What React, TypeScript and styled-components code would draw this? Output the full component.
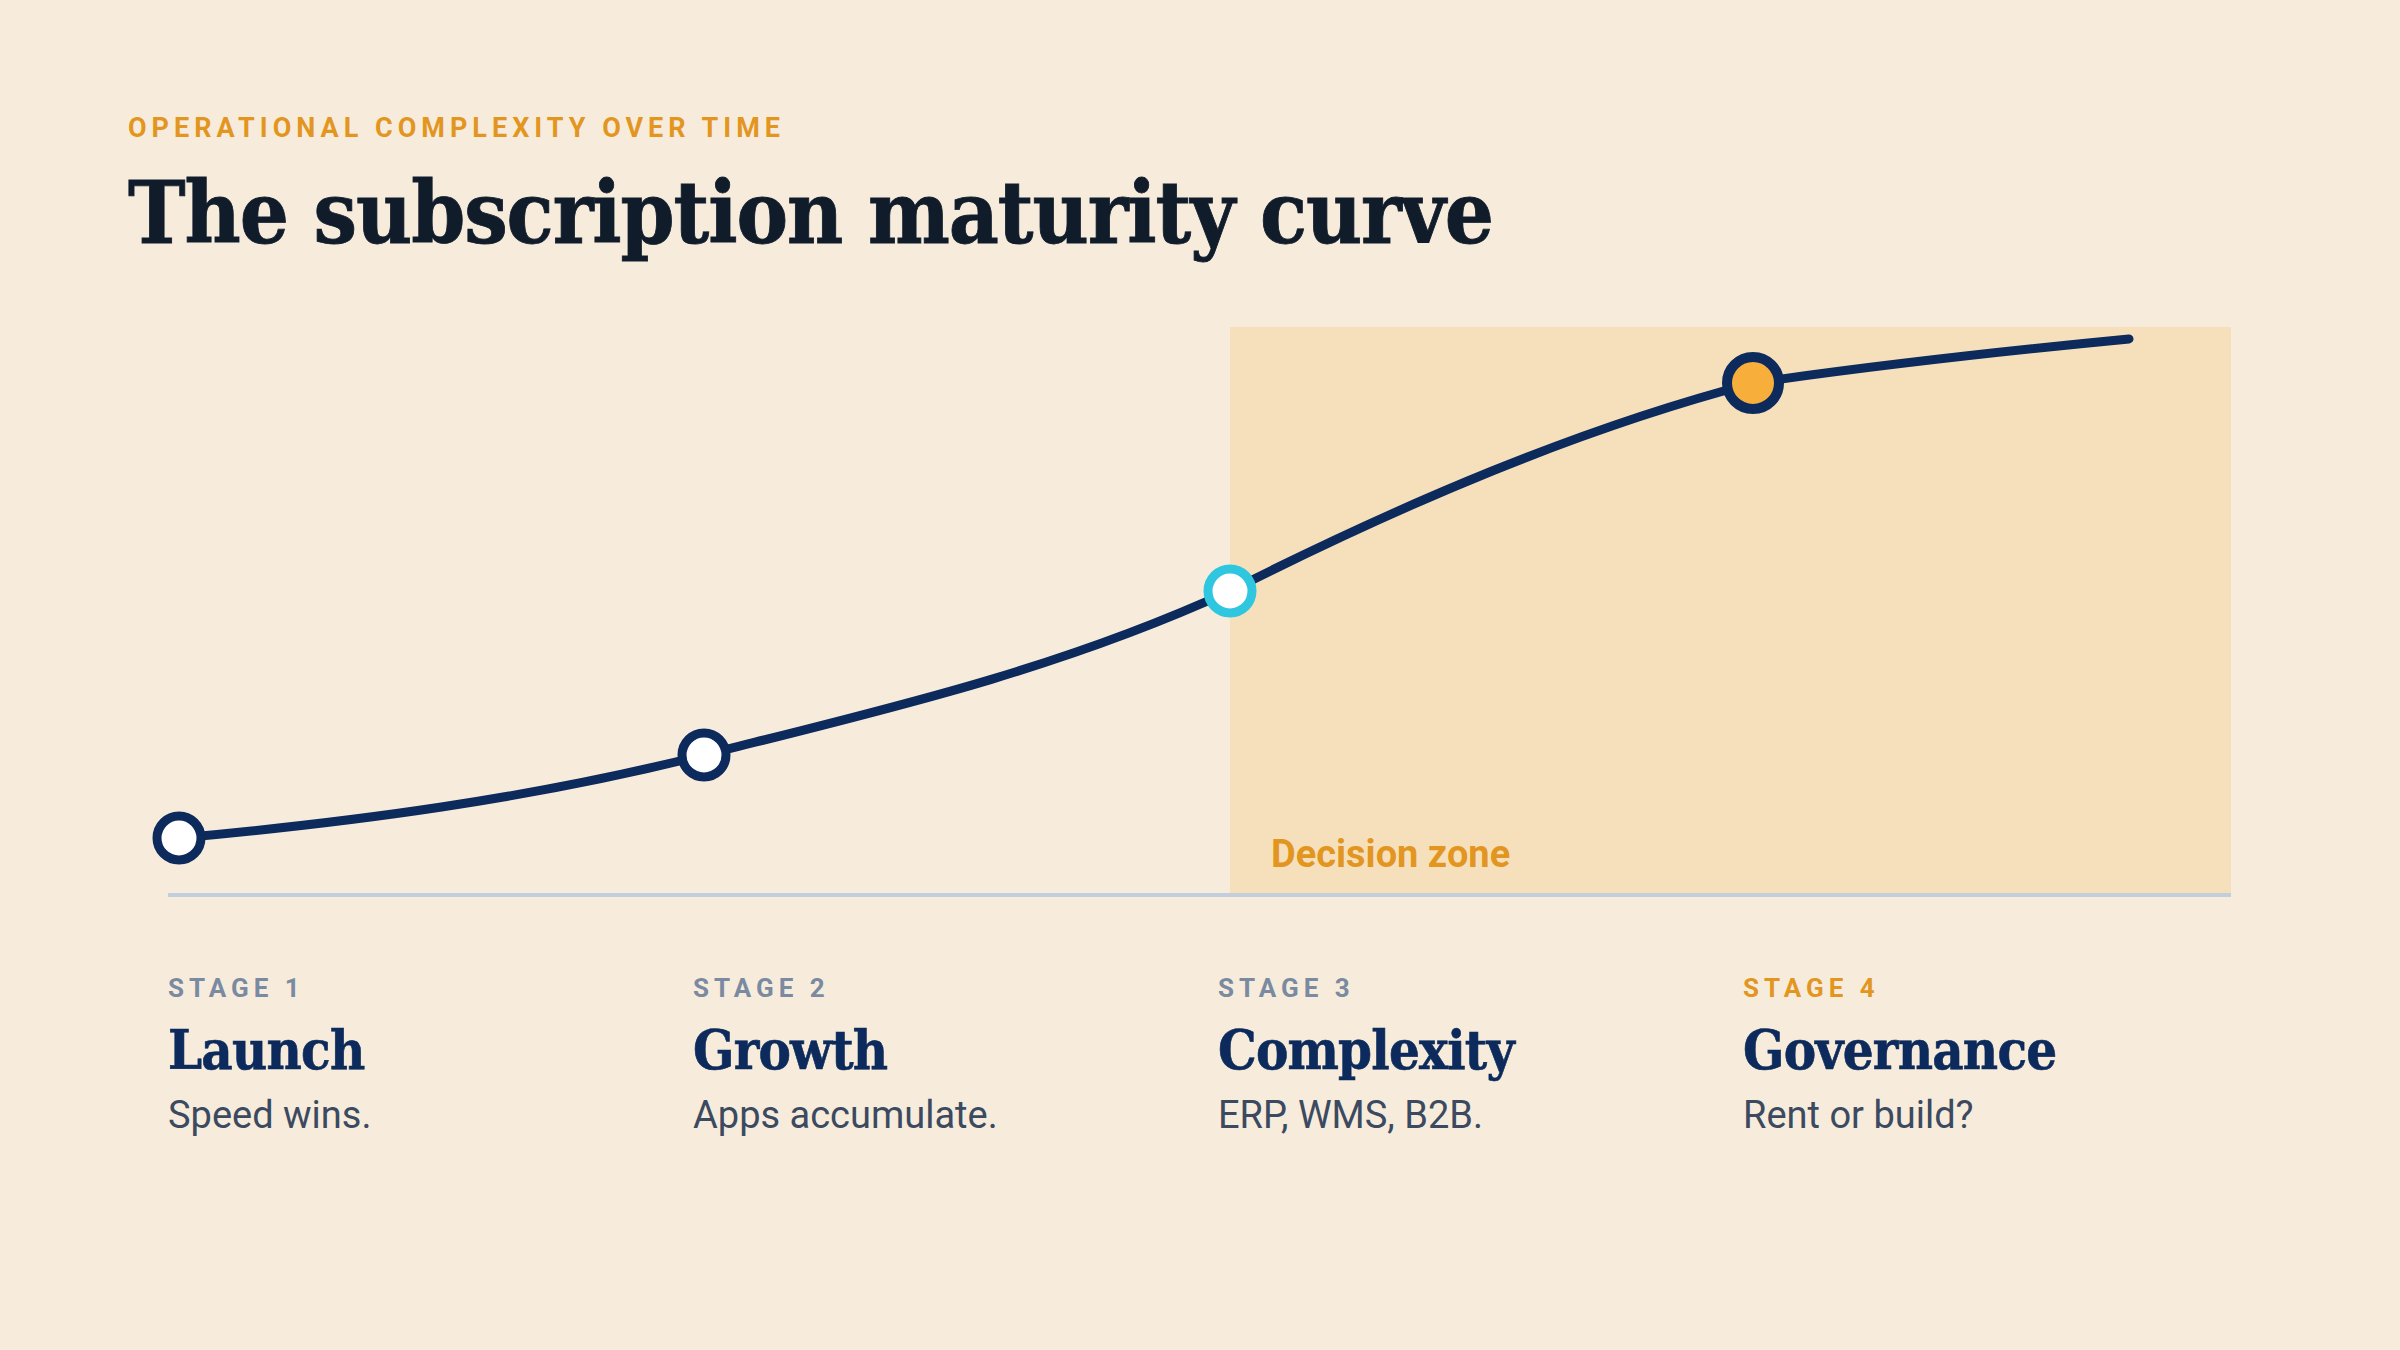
import styled, { createGlobalStyle } from 'styled-components'

const BG = '#F7ECDB'
const NAVY = '#0C2A5C'
const ORANGE = '#E3961F'

const GlobalStyle = createGlobalStyle`
  html, body {
    margin: 0;
    padding: 0;
    background: ${BG};
  }
  body {
    font-family: Roboto, 'Liberation Sans', sans-serif;
  }
`

const Page = styled.div`
  width: 2400px;
  height: 1350px;
  box-sizing: border-box;
  padding: 112px 0 0 128px;
  background: ${BG};
  overflow: hidden;
`

const Eyebrow = styled.div`
  font-family: Roboto, 'Liberation Sans', sans-serif;
  font-weight: 700;
  font-size: 27px;
  line-height: 32px;
  letter-spacing: 5px;
  color: ${ORANGE};
  text-transform: uppercase;
`

const Title = styled.h1`
  margin: 14px 0 0;
  font-family: 'Roboto Slab', 'DejaVu Serif Condensed', 'DejaVu Serif', serif;
  font-weight: 700;
  font-size: 86px;
  line-height: 110px;
  letter-spacing: -1.1px;
  color: #111C2B;
  -webkit-text-stroke: 0.8px #111C2B;
`

const Chart = styled.svg`
  display: block;
  margin-top: 31px;
  overflow: visible;
`

const Stages = styled.div`
  display: grid;
  grid-template-columns: repeat(4, 525px);
  margin: 74px 0 0 40px;
`

const Stage = styled.div`
  display: flex;
  flex-direction: column;
`

const StageLabel = styled.div<{ $active?: boolean }>`
  font-family: Roboto, 'Liberation Sans', sans-serif;
  font-weight: 700;
  font-size: 26px;
  line-height: 30px;
  letter-spacing: 5px;
  color: ${p => (p.$active ? ORANGE : '#7A8AA1')};
`

const StageName = styled.div`
  margin-top: 16px;
  font-family: 'Roboto Slab', 'DejaVu Serif Condensed', 'DejaVu Serif', serif;
  font-weight: 700;
  font-size: 54px;
  line-height: 62px;
  letter-spacing: -0.8px;
  color: ${NAVY};
  -webkit-text-stroke: 0.6px ${NAVY};
`

const StageText = styled.div`
  margin-top: 12px;
  font-family: Roboto, 'Liberation Sans', sans-serif;
  font-weight: 400;
  font-size: 38px;
  line-height: 44px;
  color: #3B4A60;
`

// chart coordinates are relative to the svg origin (page x 128, y 300)
const OX = 128
const OY = 300

type Pt = { x: number; y: number }
const at = (x: number, y: number): Pt => ({ x: x - OX, y: y - OY })

const nodes = [
  { ...at(179, 839), kind: 'plain' },
  { ...at(704, 756), kind: 'plain' },
  { ...at(1230, 592), kind: 'cyan' },
  { ...at(1753, 384), kind: 'active' },
]
const end = at(2129, 340)

// each segment: start, outgoing handle, incoming handle (both as dx,dy), end
const segments: [Pt, Pt, Pt, Pt][] = [
  [nodes[0], { x: 175, y: -16 }, { x: 175, y: -44 }, nodes[1]],
  [nodes[1], { x: 175, y: -44 }, { x: 175, y: -80 }, nodes[2]],
  [nodes[2], { x: 175, y: -88 }, { x: 175, y: -46 }, nodes[3]],
  [nodes[3], { x: 125, y: -18 }, { x: 125, y: -12 }, end],
]

const curvePath = () => {
  let d = `M ${nodes[0].x} ${nodes[0].y}`
  segments.forEach(([a, h1, h2, b]) => {
    d += ` C ${a.x + h1.x} ${a.y + h1.y}, ${b.x - h2.x} ${b.y - h2.y}, ${b.x} ${b.y}`
  })
  return d
}

const stages = [
  { label: 'STAGE 1', name: 'Launch', text: 'Speed wins.' },
  { label: 'STAGE 2', name: 'Growth', text: 'Apps accumulate.' },
  { label: 'STAGE 3', name: 'Complexity', text: 'ERP, WMS, B2B.' },
  { label: 'STAGE 4', name: 'Governance', text: 'Rent or build?', active: true },
]

const App = () => {
  return (
    <>
      <GlobalStyle />
      <Page>
        <Eyebrow>Operational complexity over time</Eyebrow>
        <Title>The subscription maturity curve</Title>
        <Chart width={2140} height={600} viewBox="0 0 2140 600">
          <rect x={1230 - OX} y={328 - OY} width={2231 - 1230} height={895 - 328} fill="#F6E0BC" />
          <line x1={168 - OX} y1={896 - OY} x2={2231 - OX} y2={896 - OY} stroke="#C3CEDD" strokeWidth={4} />
          <text
            x={1271 - OX}
            y={868 - OY}
            fill={ORANGE}
            fontFamily="Roboto, 'Liberation Sans', sans-serif"
            fontWeight={700}
            fontSize={38}
          >
            Decision zone
          </text>
          <path d={curvePath()} fill="none" stroke={NAVY} strokeWidth={9} strokeLinecap="round" />
          {nodes.map((p, i) => (
            <circle
              key={i}
              cx={p.x}
              cy={p.y}
              r={p.kind === 'active' ? 26 : 22}
              fill={p.kind === 'active' ? '#F8AE3B' : '#FFFFFF'}
              stroke={p.kind === 'cyan' ? '#2FC6E0' : NAVY}
              strokeWidth={p.kind === 'active' ? 10 : 9}
            />
          ))}
        </Chart>
        <Stages>
          {stages.map(s => (
            <Stage key={s.label}>
              <StageLabel $active={s.active}>{s.label}</StageLabel>
              <StageName>{s.name}</StageName>
              <StageText>{s.text}</StageText>
            </Stage>
          ))}
        </Stages>
      </Page>
    </>
  )
}

export default App
